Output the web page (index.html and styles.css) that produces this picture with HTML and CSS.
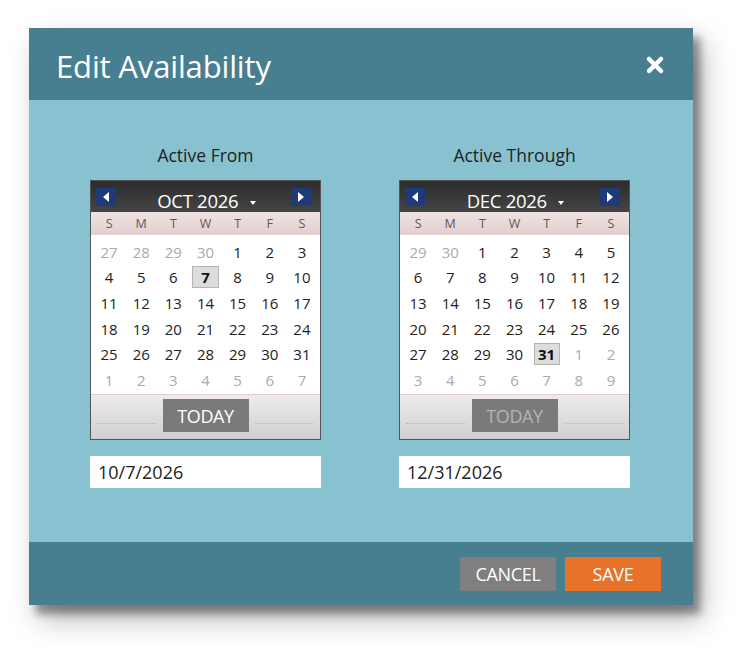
FILE: index.html
```html
<!DOCTYPE html>
<html>
<head>
<meta charset="utf-8">
<link rel="stylesheet" href="styles.css">
</head>
<body>
<div class="dialog">
  <div class="dlg-head">
    <div class="dlg-title">Edit Availability</div>
    <svg class="close" width="20" height="20" viewBox="0 0 20 20"><path d="M4 4 L16 16 M16 4 L4 16" stroke="#fff" stroke-width="4.5" stroke-linecap="round"/></svg>
  </div>
  <div class="dlg-body">
    <div class="col">
      <div class="label">Active From</div>
      <div class="cal">
        <div class="cal-head">
          <span class="nav"><svg width="8" height="10" viewBox="0 0 8 10"><path d="M7 0 L1 5 L7 10Z" fill="#fff"/></svg></span>
          <span class="month">OCT 2026 <span class="caret"></span></span>
          <span class="nav"><svg width="8" height="10" viewBox="0 0 8 10"><path d="M1 0 L7 5 L1 10Z" fill="#fff"/></svg></span>
        </div>
        <div class="dow"><span>S</span><span>M</span><span>T</span><span>W</span><span>T</span><span>F</span><span>S</span></div>
        <div class="days">
          <span class="o">27</span><span class="o">28</span><span class="o">29</span><span class="o">30</span><span>1</span><span>2</span><span>3</span>
          <span>4</span><span>5</span><span>6</span><span class="sel">7</span><span>8</span><span>9</span><span>10</span>
          <span>11</span><span>12</span><span>13</span><span>14</span><span>15</span><span>16</span><span>17</span>
          <span>18</span><span>19</span><span>20</span><span>21</span><span>22</span><span>23</span><span>24</span>
          <span>25</span><span>26</span><span>27</span><span>28</span><span>29</span><span>30</span><span>31</span>
          <span class="o">1</span><span class="o">2</span><span class="o">3</span><span class="o">4</span><span class="o">5</span><span class="o">6</span><span class="o">7</span>
        </div>
        <div class="cal-foot"><span class="dots"></span><button class="today">TODAY</button><span class="dots"></span></div>
      </div>
      <div class="input">10/7/2026</div>
    </div>
    <div class="col">
      <div class="label">Active Through</div>
      <div class="cal">
        <div class="cal-head">
          <span class="nav"><svg width="8" height="10" viewBox="0 0 8 10"><path d="M7 0 L1 5 L7 10Z" fill="#fff"/></svg></span>
          <span class="month">DEC 2026 <span class="caret"></span></span>
          <span class="nav"><svg width="8" height="10" viewBox="0 0 8 10"><path d="M1 0 L7 5 L1 10Z" fill="#fff"/></svg></span>
        </div>
        <div class="dow"><span>S</span><span>M</span><span>T</span><span>W</span><span>T</span><span>F</span><span>S</span></div>
        <div class="days">
          <span class="o">29</span><span class="o">30</span><span>1</span><span>2</span><span>3</span><span>4</span><span>5</span>
          <span>6</span><span>7</span><span>8</span><span>9</span><span>10</span><span>11</span><span>12</span>
          <span>13</span><span>14</span><span>15</span><span>16</span><span>17</span><span>18</span><span>19</span>
          <span>20</span><span>21</span><span>22</span><span>23</span><span>24</span><span>25</span><span>26</span>
          <span>27</span><span>28</span><span>29</span><span>30</span><span class="sel">31</span><span class="o">1</span><span class="o">2</span>
          <span class="o">3</span><span class="o">4</span><span class="o">5</span><span class="o">6</span><span class="o">7</span><span class="o">8</span><span class="o">9</span>
        </div>
        <div class="cal-foot"><span class="dots"></span><button class="today dim">TODAY</button><span class="dots"></span></div>
      </div>
      <div class="input">12/31/2026</div>
    </div>
  </div>
  <div class="dlg-foot">
    <button class="btn cancel">CANCEL</button>
    <button class="btn save">SAVE</button>
  </div>
</div>
</body>
</html>
```

FILE: styles.css
```css
html, body {
  margin: 0;
  padding: 0;
  background: #fff;
}
body {
  font-family: "Open Sans", "Noto Sans", sans-serif;
  padding: 28px 0 0 29px;
  min-height: 661px;
  box-sizing: border-box;
}
.dialog {
  width: 664px;
  background: #88c2d0;
  box-shadow: 7px 9px 8px rgba(0,0,0,0.38), 10px 14px 28px rgba(0,0,0,0.28);
}
.dlg-head {
  height: 72px;
  background: #477f90;
  display: flex;
  align-items: center;
  justify-content: space-between;
  padding: 0 28px 0 27px;
  box-sizing: border-box;
}
.dlg-title {
  color: #fff;
  font-size: 31px;
  letter-spacing: -0.15px;
  margin-top: 3px;
}
.close {
  margin-top: 2px;
}
.dlg-body {
  height: 442px;
  box-sizing: border-box;
  padding: 43px 0 0 61px;
  display: flex;
  gap: 78px;
}
.col {
  width: 231px;
  display: flex;
  flex-direction: column;
}
.label {
  text-align: center;
  font-size: 17.5px;
  color: #222;
  line-height: 24px;
  height: 37px;
}
.cal {
  border: 1px solid #555;
  background: #fff;
  box-sizing: border-box;
  height: 260px;
  display: flex;
  flex-direction: column;
}
.cal-head {
  height: 31px;
  background: linear-gradient(#2c2c2c, #454545);
  display: flex;
  align-items: flex-start;
  justify-content: space-between;
  padding: 7px 9px 0 5px;
  box-sizing: border-box;
}
.nav {
  width: 20px;
  height: 18px;
  background: #1f3a78;
  display: flex;
  align-items: center;
  justify-content: center;
}
.month {
  color: #fff;
  font-size: 18.5px;
  line-height: 26px;
  margin-left: 6px;
  letter-spacing: -0.3px;
}
.caret {
  display: inline-block;
  width: 0;
  height: 0;
  border-left: 3.5px solid transparent;
  border-right: 3.5px solid transparent;
  border-top: 4px solid #fff;
  margin-left: 7px;
  vertical-align: middle;
}
.dow {
  height: 23px;
  background: linear-gradient(#f0e2e2, #e2cfcf);
  display: grid;
  grid-template-columns: repeat(7, 1fr);
  font-size: 12.5px;
  color: #5a5a5a;
  line-height: 23px;
  text-align: center;
  padding: 0 2px;
}
.days {
  display: grid;
  grid-template-columns: repeat(7, 1fr);
  grid-auto-rows: 25.6px;
  padding: 4px 2px 0 2px;
  height: 160px;
  box-sizing: border-box;
  font-size: 15px;
  color: #222;
  text-align: center;
  align-items: center;
  border-bottom: 1px solid #e2cccc;
}
.days span {
  line-height: 22px;
  margin: 0 3px;
}
.days .o {
  color: #aaa;
}
.days .sel {
  background: #dcdcdc;
  border: 1px solid #b4b4b4;
  font-weight: bold;
  color: #111;
  line-height: 20px;
}
.cal-foot {
  flex: 1;
  background: linear-gradient(#ececec, #cfcfcf);
  display: flex;
  align-items: center;
  justify-content: center;
  gap: 6px;
  padding: 0 6px;
}
.dots {
  flex: 1;
  border-top: 1px dotted #b8b8b8;
  margin-top: 12px;
}
.today {
  width: 86px;
  height: 33px;
  border: none;
  background: #7a7a7a;
  color: #fff;
  font-family: "Open Sans", "Noto Sans", sans-serif;
  font-size: 18px;
  letter-spacing: -0.4px;
  padding: 0;
  margin-bottom: 3px;
}
.today.dim {
  color: #b4b4b4;
}
.input {
  margin-top: 16px;
  height: 32px;
  background: #fff;
  font-size: 18px;
  color: #222;
  line-height: 32px;
  padding-left: 8px;
}
.dlg-foot {
  height: 63px;
  background: #477f90;
  display: flex;
  justify-content: flex-end;
  align-items: center;
  gap: 9px;
  padding-right: 32px;
}
.btn {
  width: 96px;
  height: 34px;
  border: none;
  color: #fff;
  font-family: "Open Sans", "Noto Sans", sans-serif;
  font-size: 18px;
  letter-spacing: -0.3px;
  padding: 0;
  margin-top: 1px;
}
.cancel {
  background: #7f7f7f;
}
.save {
  background: #e8722a;
}
```
